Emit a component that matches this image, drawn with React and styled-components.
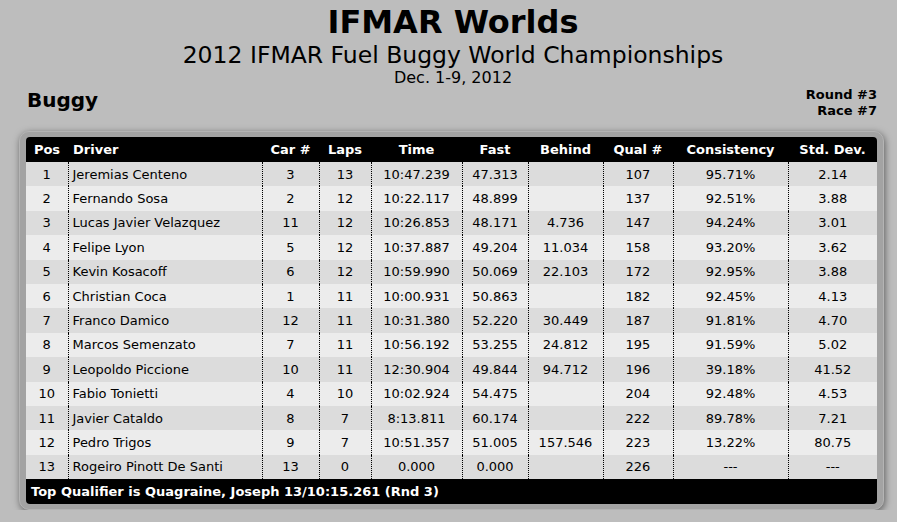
import React from 'react';
import styled, { createGlobalStyle } from 'styled-components';

const GlobalStyle = createGlobalStyle`
  body {
    margin: 0;
    background: #bdbdbd;
    font-family: "DejaVu Sans", Verdana, sans-serif;
    color: #000;
  }
`;

const Page = styled.div`
  width: 868px;
  padding-left: 19px;
`;

const Title = styled.h1`
  margin: 5px 0 0;
  font-size: 32px;
  line-height: 34px;
  font-weight: bold;
  text-align: center;
`;

const SubTitle = styled.div`
  margin-top: 4px;
  font-size: 23.5px;
  line-height: 24px;
  text-align: center;
`;

const Dates = styled.div`
  margin-top: 2px;
  font-size: 16px;
  line-height: 18px;
  text-align: center;
`;

const InfoRow = styled.div`
  display: flex;
  justify-content: space-between;
  align-items: flex-start;
  padding: 0 10px 0 8px;
`;

const ClassName = styled.div`
  margin-top: 1px;
  font-size: 20px;
  line-height: 24px;
  font-weight: bold;
`;

const RaceInfo = styled.div`
  font-size: 13px;
  line-height: 16px;
  font-weight: bold;
  text-align: right;
`;

const Frame = styled.div`
  width: 851px;
  margin-top: 12px;
  padding: 5px 6px 5px 6px;
  background: #a3a3a3;
  border: 1px solid #b4b4b4;
  border-radius: 10px;
  box-shadow: 1px 2px 7px rgba(0, 0, 0, 0.5);
`;

const Inner = styled.div`
  background: #000;
  border-radius: 4px;
  overflow: hidden;
`;

const Table = styled.table`
  width: 851px;
  table-layout: fixed;
  border-collapse: collapse;
  font-size: 13px;
`;

const Th = styled.th`
  height: 25px;
  padding: 0 ${p => (p.$left ? '5px' : '2px')};
  color: #fff;
  font-weight: bold;
  text-align: ${p => (p.$left ? 'left' : 'center')};
  white-space: nowrap;
`;

const Row = styled.tr`
  height: 24.4px;
  background: ${p => (p.$odd ? '#dcdcdc' : '#ececec')};
  & + & td {
    border-top: 1px dotted #000;
  }
`;

const Td = styled.td`
  padding: 0 ${p => (p.$left ? '4px' : '2px')};
  text-align: ${p => (p.$left ? 'left' : 'center')};
  white-space: nowrap;
  & + & {
    border-left: 1px dotted #000;
  }
`;

const Footer = styled.div`
  height: 25px;
  line-height: 25px;
  padding-left: 5px;
  color: #fff;
  font-size: 13px;
  font-weight: bold;
`;

const columns = [
  { key: 'pos', label: 'Pos', width: 42 },
  { key: 'driver', label: 'Driver', width: 194, left: true },
  { key: 'car', label: 'Car #', width: 57 },
  { key: 'laps', label: 'Laps', width: 52 },
  { key: 'time', label: 'Time', width: 91 },
  { key: 'fast', label: 'Fast', width: 66 },
  { key: 'behind', label: 'Behind', width: 75 },
  { key: 'qual', label: 'Qual #', width: 70 },
  { key: 'cons', label: 'Consistency', width: 115 },
  { key: 'dev', label: 'Std. Dev.', width: 89 },
];

const results = [
  ['1', 'Jeremias Centeno', '3', '13', '10:47.239', '47.313', '', '107', '95.71%', '2.14'],
  ['2', 'Fernando Sosa', '2', '12', '10:22.117', '48.899', '', '137', '92.51%', '3.88'],
  ['3', 'Lucas Javier Velazquez', '11', '12', '10:26.853', '48.171', '4.736', '147', '94.24%', '3.01'],
  ['4', 'Felipe Lyon', '5', '12', '10:37.887', '49.204', '11.034', '158', '93.20%', '3.62'],
  ['5', 'Kevin Kosacoff', '6', '12', '10:59.990', '50.069', '22.103', '172', '92.95%', '3.88'],
  ['6', 'Christian Coca', '1', '11', '10:00.931', '50.863', '', '182', '92.45%', '4.13'],
  ['7', 'Franco Damico', '12', '11', '10:31.380', '52.220', '30.449', '187', '91.81%', '4.70'],
  ['8', 'Marcos Semenzato', '7', '11', '10:56.192', '53.255', '24.812', '195', '91.59%', '5.02'],
  ['9', 'Leopoldo Piccione', '10', '11', '12:30.904', '49.844', '94.712', '196', '39.18%', '41.52'],
  ['10', 'Fabio Tonietti', '4', '10', '10:02.924', '54.475', '', '204', '92.48%', '4.53'],
  ['11', 'Javier Cataldo', '8', '7', '8:13.811', '60.174', '', '222', '89.78%', '7.21'],
  ['12', 'Pedro Trigos', '9', '7', '10:51.357', '51.005', '157.546', '223', '13.22%', '80.75'],
  ['13', 'Rogeiro Pinott De Santi', '13', '0', '0.000', '0.000', '', '226', '---', '---'],
];

export default function App() {
  return (
    <Page>
      <GlobalStyle />
      <Title>IFMAR Worlds</Title>
      <SubTitle>2012 IFMAR Fuel Buggy World Championships</SubTitle>
      <Dates>Dec. 1-9, 2012</Dates>
      <InfoRow>
        <ClassName>Buggy</ClassName>
        <RaceInfo>
          <div>Round #3</div>
          <div>Race #7</div>
        </RaceInfo>
      </InfoRow>
      <Frame>
        <Inner>
          <Table>
            <colgroup>
              {columns.map(c => (
                <col key={c.key} style={{ width: c.width }} />
              ))}
            </colgroup>
            <thead>
              <tr>
                {columns.map(c => (
                  <Th key={c.key} $left={c.left}>{c.label}</Th>
                ))}
              </tr>
            </thead>
            <tbody>
              {results.map((r, i) => (
                <Row key={r[0]} $odd={i % 2 === 0}>
                  {r.map((v, j) => (
                    <Td key={columns[j].key} $left={columns[j].left}>{v}</Td>
                  ))}
                </Row>
              ))}
            </tbody>
          </Table>
          <Footer>Top Qualifier is Quagraine, Joseph 13/10:15.261 (Rnd 3)</Footer>
        </Inner>
      </Frame>
    </Page>
  );
}
